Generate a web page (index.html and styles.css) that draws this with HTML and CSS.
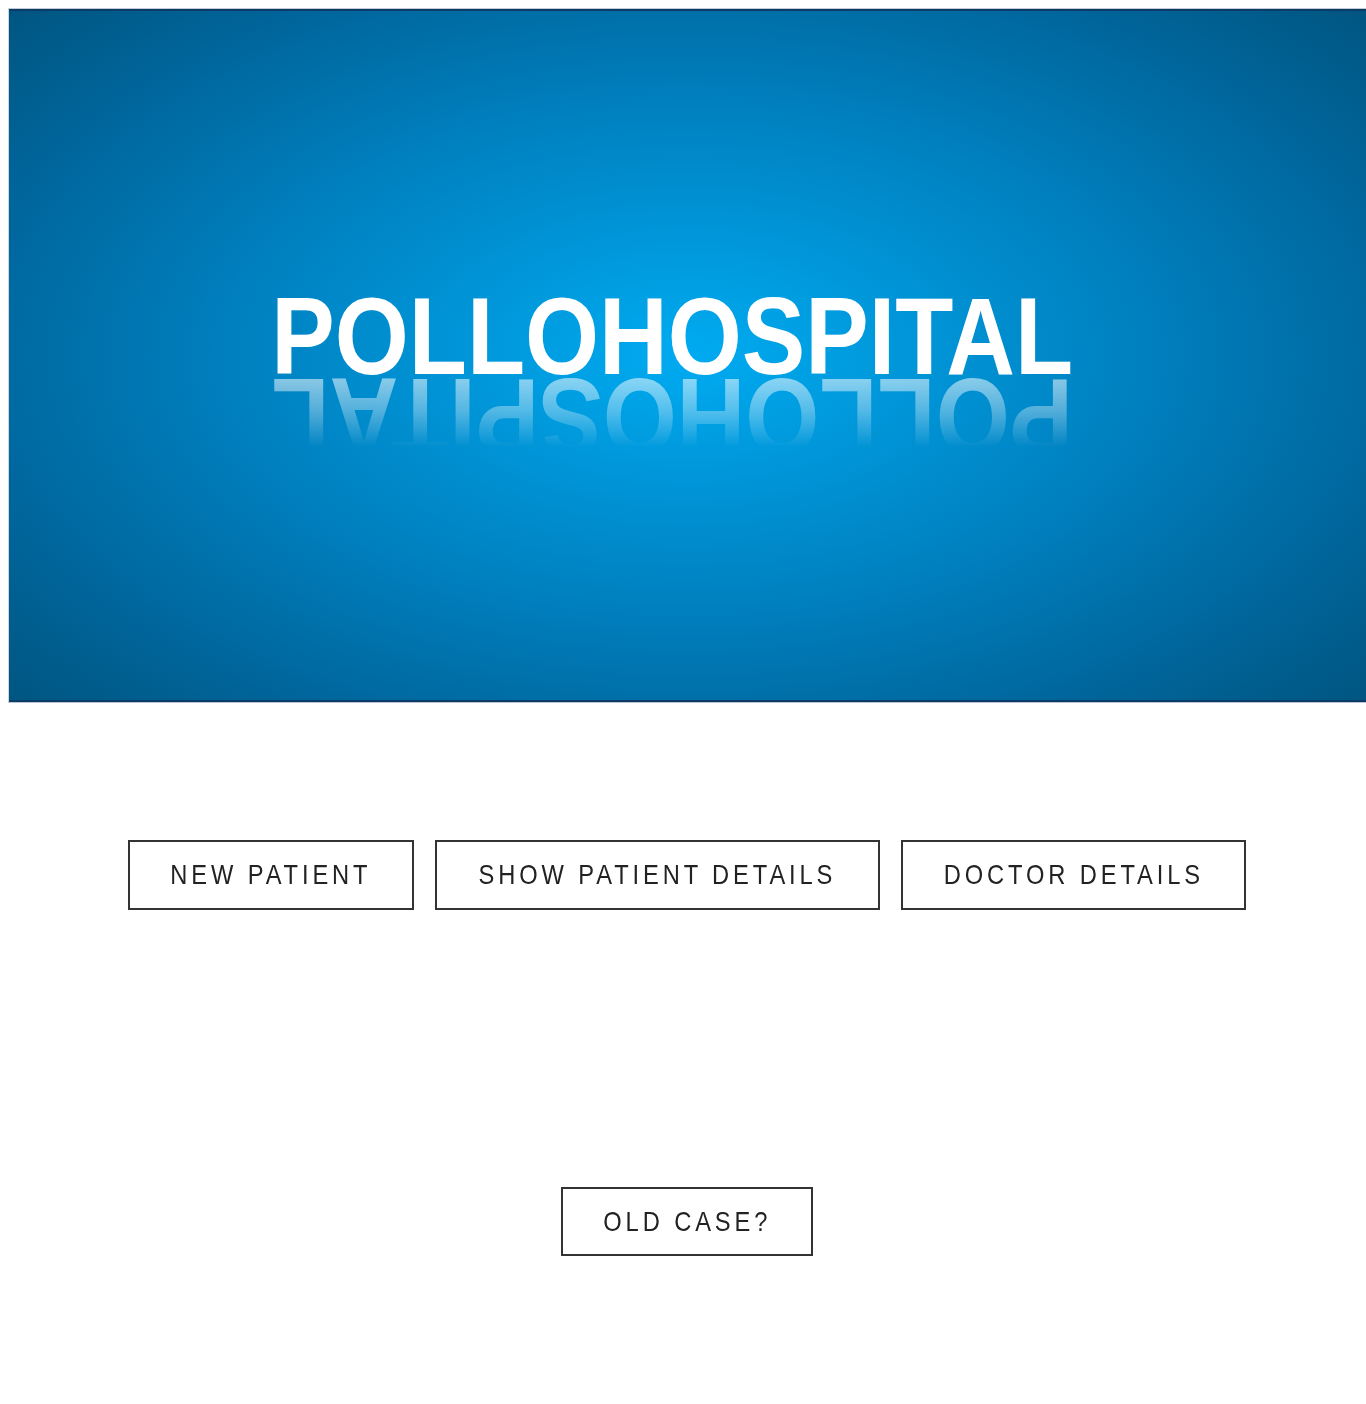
FILE: index.html
```html
<!DOCTYPE html>
<html lang="en">
<head>
<meta charset="utf-8">
<title>Pollohospital</title>
<link rel="stylesheet" href="styles.css">
</head>
<body>
<div class="page">
  <header class="hero">
    <div class="hero-inner">
      <h1 class="title"><span class="title-text">POLLOHOSPITAL</span></h1>
      <div class="reflection" aria-hidden="true"><span class="reflection-text">POLLOHOSPITAL</span></div>
    </div>
  </header>
  <main class="actions">
    <nav class="button-row">
      <a class="btn btn-new" href="#"><span class="btn-label">NEW PATIENT</span></a>
      <a class="btn btn-show" href="#"><span class="btn-label">SHOW PATIENT DETAILS</span></a>
      <a class="btn btn-doctor" href="#"><span class="btn-label">DOCTOR DETAILS</span></a>
    </nav>
    <div class="old-row">
      <a class="btn btn-old" href="#"><span class="btn-label">OLD CASE?</span></a>
    </div>
  </main>
</div>
</body>
</html>
```
FILE: styles.css
```css
body {
  margin: 8px 0 8px 8px;
  background: #ffffff;
  font-family: "Liberation Sans", Arial, sans-serif;
}
.page {
  width: 1358px;
}
.hero {
  border-top: 1px solid #c3ccd6;
  border-bottom: 1px solid #b7c3d1;
  border-left: 1px solid #d0d6dc;
}
.hero-inner {
  height: 693px;
  border-top: 2px solid #0c3b68;
  border-bottom: 2px solid #0c3b68;
  background: radial-gradient(ellipse 70% 76% at 50% 50%, #00abf1 0%, #0099dc 20%, #0080bf 48%, #00669c 76%, #00537d 100%);
  display: flex;
  flex-direction: column;
  align-items: center;
  padding-top: 271px;
  padding-right: 30px;
  box-sizing: border-box;
  overflow: hidden;
}
.title {
  margin: 0;
  font-size: 109px;
  line-height: 109px;
  font-weight: bold;
  color: #ffffff;
}
.title-text {
  display: inline-block;
  transform: scaleX(0.873);
}
.reflection {
  margin-top: -29px;
  font-size: 109px;
  line-height: 109px;
  font-weight: bold;
  color: #ffffff;
  -webkit-mask-image: linear-gradient(to bottom, rgba(0,0,0,0.55) 14%, rgba(0,0,0,0.32) 45%, rgba(0,0,0,0) 78%);
  mask-image: linear-gradient(to bottom, rgba(0,0,0,0.55) 14%, rgba(0,0,0,0.32) 45%, rgba(0,0,0,0) 78%);
}
.reflection-text {
  display: inline-block;
  transform: scale(-0.873, -1);
}
.actions {
  display: flex;
  flex-direction: column;
  align-items: center;
}
.button-row {
  margin-top: 137px;
  display: flex;
  justify-content: center;
  gap: 21px;
}
.old-row {
  margin-top: 277px;
  display: flex;
  justify-content: center;
}
.btn {
  box-sizing: border-box;
  height: 70px;
  border: 2px solid #333333;
  display: flex;
  align-items: center;
  justify-content: center;
  text-decoration: none;
  color: #222222;
  font-size: 28px;
  line-height: 28px;
  letter-spacing: 4.6px;
  white-space: nowrap;
  overflow: hidden;
}
.btn-label {
  display: inline-block;
  transform: scaleX(0.846);
}
.btn-new { width: 286px; }
.btn-show { width: 445px; }
.btn-doctor { width: 345px; }
.btn-old { width: 252px; height: 69px; }
```
